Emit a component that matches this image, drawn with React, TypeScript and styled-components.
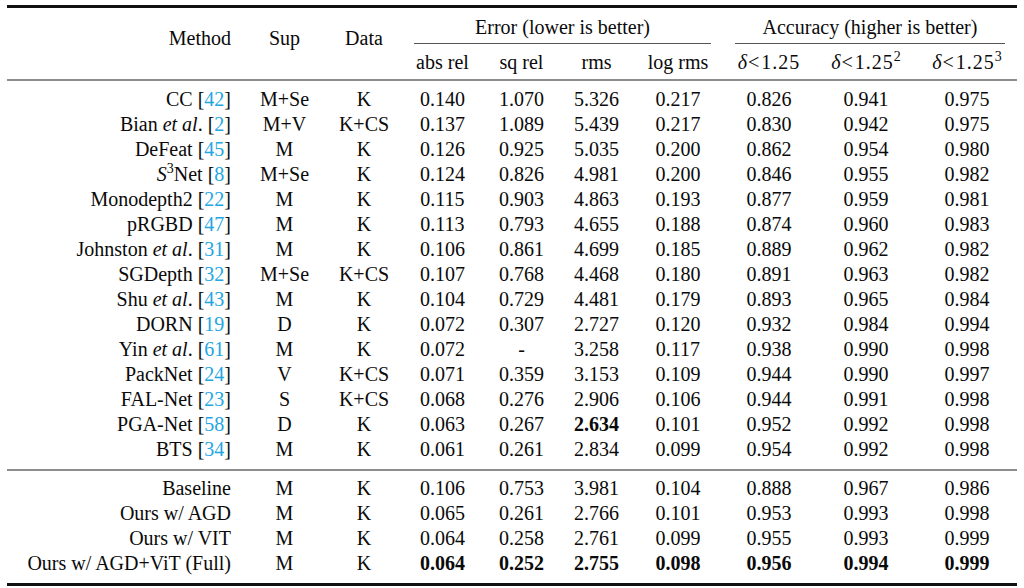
import * as React from 'react'
import styled, { createGlobalStyle } from 'styled-components'

const COLS = '236px 83px 76px 81px 77px 73px 90px 92px 102px 100px'

const Global = createGlobalStyle`
  html, body {
    margin: 0;
    padding: 0;
    background: #fff;
  }
  body {
    font-family: 'Liberation Serif', 'Times New Roman', serif;
    font-size: 20px;
    color: #0a0a0a;
  }
`

const Page = styled.div`
  width: 1024px;
  height: 588px;
  padding-top: 5px;
  box-sizing: border-box;
  overflow: hidden;
`

const Table = styled.div`
  width: 1010px;
  margin-left: 7px;
`

const Rule = styled.div<{ $size: number; $color: string }>`
  height: ${p => p.$size}px;
  background: ${p => p.$color};
`

const Head = styled.div`
  display: grid;
  grid-template-columns: ${COLS};
  grid-template-rows: auto auto;
  line-height: 25px;
`

const StubHead = styled.div<{ $align?: 'right' | 'center' }>`
  grid-row: 1 / 3;
  text-align: ${p => p.$align || 'center'};
  padding-top: 18px;
  padding-right: ${p => (p.$align === 'right' ? '12px' : '0')};
`

const GroupHead = styled.div<{ $span: number }>`
  grid-row: 1;
  grid-column: span ${p => p.$span};
  margin: 0 12px 0 12px;
  padding: 7px 0 3px;
  text-align: center;
  white-space: nowrap;
  border-bottom: 1px solid #555;
`

const SubHead = styled.div`
  grid-row: 2;
  padding: 6px 0 4px;
  text-align: center;
  white-space: nowrap;
`

const Body = styled.div<{ $top: number; $bottom: number }>`
  padding: ${p => p.$top}px 0 ${p => p.$bottom}px;
`

const Row = styled.div`
  display: grid;
  grid-template-columns: ${COLS};
  height: 25px;
  line-height: 25px;
`

const Cell = styled.div<{ $bold?: boolean; $stub?: boolean }>`
  text-align: ${p => (p.$stub ? 'right' : 'center')};
  padding-right: ${p => (p.$stub ? '12px' : '0')};
  font-weight: ${p => (p.$bold ? 700 : 400)};
  white-space: nowrap;
`

const CiteNum = styled.span`
  color: #22a6e4;
`

const Sup = styled.sup`
  font-size: 14px;
  line-height: 0;
  vertical-align: 0;
  position: relative;
  top: -8px;
`

const Delta = styled.span`
  font-style: italic;
`

const Less = styled.span`
  margin: 0 2px 0 1px;
`

const MathNum = styled.span`
  letter-spacing: 1px;
`

type Row = {
  method: React.ReactNode
  sup: string
  data: string
  values: string[]
  bold?: number[]
}

const cite = (n: number) => (
  <>
    {' '}[<CiteNum>{n}</CiteNum>]
  </>
)

const etal = (name: string, n: number) => (
  <>
    {name} <i>et al</i>.{cite(n)}
  </>
)

const prior: Row[] = [
  { method: <>CC{cite(42)}</>, sup: 'M+Se', data: 'K', values: ['0.140', '1.070', '5.326', '0.217', '0.826', '0.941', '0.975'] },
  { method: etal('Bian', 2), sup: 'M+V', data: 'K+CS', values: ['0.137', '1.089', '5.439', '0.217', '0.830', '0.942', '0.975'] },
  { method: <>DeFeat{cite(45)}</>, sup: 'M', data: 'K', values: ['0.126', '0.925', '5.035', '0.200', '0.862', '0.954', '0.980'] },
  {
    method: (
      <>
        <i>S</i>
        <Sup>3</Sup>Net{cite(8)}
      </>
    ),
    sup: 'M+Se',
    data: 'K',
    values: ['0.124', '0.826', '4.981', '0.200', '0.846', '0.955', '0.982'],
  },
  { method: <>Monodepth2{cite(22)}</>, sup: 'M', data: 'K', values: ['0.115', '0.903', '4.863', '0.193', '0.877', '0.959', '0.981'] },
  { method: <>pRGBD{cite(47)}</>, sup: 'M', data: 'K', values: ['0.113', '0.793', '4.655', '0.188', '0.874', '0.960', '0.983'] },
  { method: etal('Johnston', 31), sup: 'M', data: 'K', values: ['0.106', '0.861', '4.699', '0.185', '0.889', '0.962', '0.982'] },
  { method: <>SGDepth{cite(32)}</>, sup: 'M+Se', data: 'K+CS', values: ['0.107', '0.768', '4.468', '0.180', '0.891', '0.963', '0.982'] },
  { method: etal('Shu', 43), sup: 'M', data: 'K', values: ['0.104', '0.729', '4.481', '0.179', '0.893', '0.965', '0.984'] },
  { method: <>DORN{cite(19)}</>, sup: 'D', data: 'K', values: ['0.072', '0.307', '2.727', '0.120', '0.932', '0.984', '0.994'] },
  { method: etal('Yin', 61), sup: 'M', data: 'K', values: ['0.072', '-', '3.258', '0.117', '0.938', '0.990', '0.998'] },
  { method: <>PackNet{cite(24)}</>, sup: 'V', data: 'K+CS', values: ['0.071', '0.359', '3.153', '0.109', '0.944', '0.990', '0.997'] },
  { method: <>FAL-Net{cite(23)}</>, sup: 'S', data: 'K+CS', values: ['0.068', '0.276', '2.906', '0.106', '0.944', '0.991', '0.998'] },
  { method: <>PGA-Net{cite(58)}</>, sup: 'D', data: 'K', values: ['0.063', '0.267', '2.634', '0.101', '0.952', '0.992', '0.998'], bold: [2] },
  { method: <>BTS{cite(34)}</>, sup: 'M', data: 'K', values: ['0.061', '0.261', '2.834', '0.099', '0.954', '0.992', '0.998'] },
]

const ours: Row[] = [
  { method: 'Baseline', sup: 'M', data: 'K', values: ['0.106', '0.753', '3.981', '0.104', '0.888', '0.967', '0.986'] },
  { method: 'Ours w/ AGD', sup: 'M', data: 'K', values: ['0.065', '0.261', '2.766', '0.101', '0.953', '0.993', '0.998'] },
  { method: 'Ours w/ VIT', sup: 'M', data: 'K', values: ['0.064', '0.258', '2.761', '0.099', '0.955', '0.993', '0.999'] },
  {
    method: 'Ours w/ AGD+ViT (Full)',
    sup: 'M',
    data: 'K',
    values: ['0.064', '0.252', '2.755', '0.098', '0.956', '0.994', '0.999'],
    bold: [0, 1, 2, 3, 4, 5, 6],
  },
]

const delta = (power?: number) => (
  <>
    <Delta>δ</Delta>
    <Less>&lt;</Less>
    <MathNum>1.25</MathNum>
    {power ? <Sup>{power}</Sup> : null}
  </>
)

const Rows: React.FC<{ rows: Row[] }> = ({ rows }) => (
  <>
    {rows.map((r, i) => (
      <Row key={i}>
        <Cell $stub>{r.method}</Cell>
        <Cell>{r.sup}</Cell>
        <Cell>{r.data}</Cell>
        {r.values.map((v, j) => (
          <Cell key={j} $bold={r.bold ? r.bold.includes(j) : false}>
            {v}
          </Cell>
        ))}
      </Row>
    ))}
  </>
)

export default function App() {
  return (
    <Page>
      <Global />
      <Table>
        <Rule $size={3} $color="#111" />
        <Head>
          <StubHead $align="right">Method</StubHead>
          <StubHead>Sup</StubHead>
          <StubHead>Data</StubHead>
          <GroupHead $span={4}>Error (lower is better)</GroupHead>
          <GroupHead $span={3}>Accuracy (higher is better)</GroupHead>
          <SubHead>abs rel</SubHead>
          <SubHead>sq rel</SubHead>
          <SubHead>rms</SubHead>
          <SubHead>log rms</SubHead>
          <SubHead>{delta()}</SubHead>
          <SubHead>{delta(2)}</SubHead>
          <SubHead>{delta(3)}</SubHead>
        </Head>
        <Rule $size={2} $color="#8c8c8c" />
        <Body $top={6} $bottom={7}>
          <Rows rows={prior} />
        </Body>
        <Rule $size={2} $color="#8c8c8c" />
        <Body $top={5} $bottom={7}>
          <Rows rows={ours} />
        </Body>
        <Rule $size={3} $color="#111" />
      </Table>
    </Page>
  )
}
